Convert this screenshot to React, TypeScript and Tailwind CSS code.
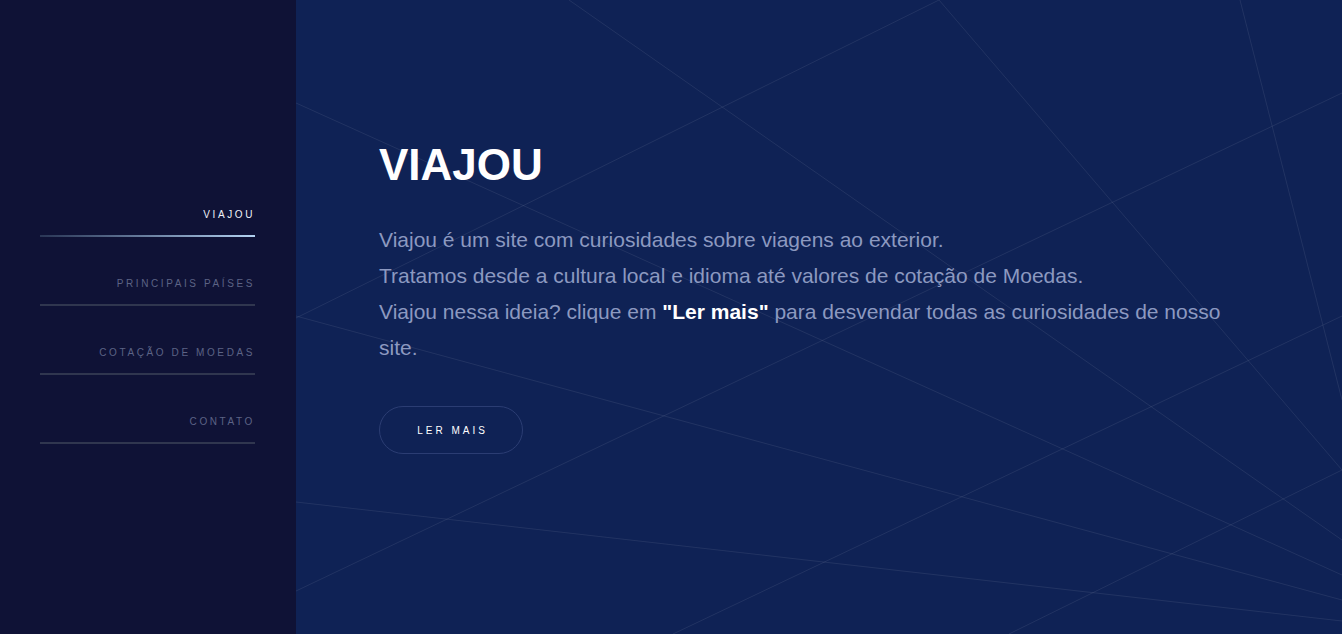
const navItems = [
  { label: "VIAJOU", active: true },
  { label: "PRINCIPAIS PAÍSES", active: false },
  { label: "COTAÇÃO DE MOEDAS", active: false },
  { label: "CONTATO", active: false },
];

// background network lines, coordinates inside the main panel (1046x634)
const lines: [number, number, number, number][] = [
  [643, 0, 0, 318],
  [0, 103, 1046, 575],
  [0, 316, 1046, 600],
  [0, 502, 1046, 621],
  [0, 591, 1046, 93],
  [377, 634, 1046, 316],
  [713, 634, 1046, 470],
  [944, 0, 1046, 400],
  [643, 0, 1046, 470],
  [273, 0, 1046, 540],
];

function Sidebar() {
  return (
    <aside className="w-[296px] shrink-0 bg-[#0f1236] pt-[208px] pl-[40px]">
      <nav className="flex w-[215px] flex-col gap-[40px]">
        {navItems.map((item) => (
          <a key={item.label} href="#" className="flex flex-col">
            <span
              className={
                "text-right text-[10px] leading-[14px] tracking-[2.6px] " +
                (item.active ? "text-[#eef1f8]" : "text-[#5c6385]")
              }
            >
              {item.label}
            </span>
            <span
              className={
                "mt-[13px] h-[2px] w-full " +
                (item.active
                  ? "bg-gradient-to-r from-[#2a3656] to-[#b3d2f2]"
                  : "bg-[#30364f]")
              }
            />
          </a>
        ))}
      </nav>
    </aside>
  );
}

function Background() {
  return (
    <svg
      className="pointer-events-none absolute inset-0 h-full w-full"
      viewBox="0 0 1046 634"
      preserveAspectRatio="none"
    >
      {lines.map(([x1, y1, x2, y2], i) => (
        <line key={i} x1={x1} y1={y1} x2={x2} y2={y2} stroke="#ffffff" strokeOpacity={0.08} strokeWidth={1} />
      ))}
    </svg>
  );
}

export default function App() {
  return (
    <div className="flex h-[634px] w-full overflow-hidden font-['Liberation_Sans',Arial,sans-serif]">
      <Sidebar />
      <main className="relative flex-1 bg-[#0f2255]">
        <Background />
        <div className="relative pl-[83px] pt-[138px]">
          <h1 className="text-[44px] font-bold leading-[54px] text-white">VIAJOU</h1>
          <p className="mt-[30px] w-[870px] text-[21px] leading-[36px] text-[#8c99c0]">
            Viajou é um site com curiosidades sobre viagens ao exterior.
            <br />
            Tratamos desde a cultura local e idioma até valores de cotação de Moedas.
            <br />
            Viajou nessa ideia? clique em <b className="font-bold text-white">"Ler mais"</b> para desvendar todas as
            curiosidades de nosso site.
          </p>
          <button className="mt-[40px] flex h-[48px] w-[144px] items-center justify-center rounded-full border border-[#2b3d73] pl-[3px] text-[10px] tracking-[3px] text-white">
            LER MAIS
          </button>
        </div>
      </main>
    </div>
  );
}
